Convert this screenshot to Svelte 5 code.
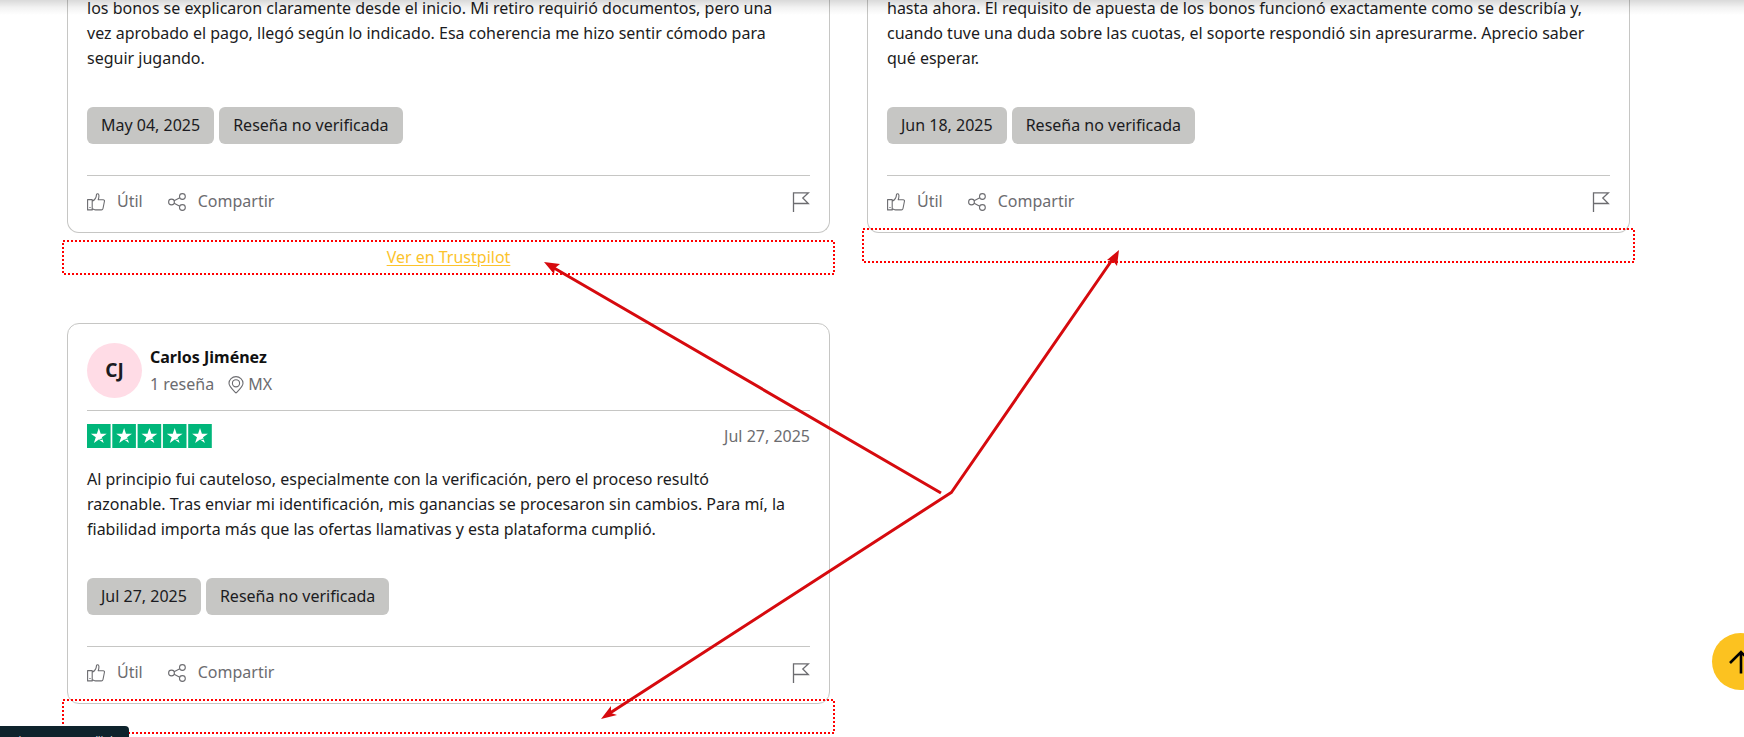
<script>
  const reviews = [
    {
      text: 'los bonos se explicaron claramente desde el inicio. Mi retiro requirió documentos, pero una\nvez aprobado el pago, llegó según lo indicado. Esa coherencia me hizo sentir cómodo para\nseguir jugando.',
      date: 'May 04, 2025',
      link: true
    },
    {
      text: 'hasta ahora. El requisito de apuesta de los bonos funcionó exactamente como se describía y,\ncuando tuve una duda sobre las cuotas, el soporte respondió sin apresurarme. Aprecio saber\nqué esperar.',
      date: 'Jun 18, 2025'
    },
    {
      name: 'Carlos Jiménez',
      initials: 'CJ',
      reviews: '1 reseña',
      country: 'MX',
      text: 'Al principio fui cauteloso, especialmente con la verificación, pero el proceso resultó\nrazonable. Tras enviar mi identificación, mis ganancias se procesaron sin cambios. Para mí, la\nfiabilidad importa más que las ofertas llamativas y esta plataforma cumplió.',
      date: 'Jul 27, 2025'
    }
  ];
  const stars = [0, 1, 2, 3, 4];
</script>

<div class="page">
  <main class="grid">
    {#each reviews as r}
      <div class="item">
        <article class="card" class:cut={!r.name}>
          {#if r.name}
            <header class="author">
              <span class="avatar">{r.initials}</span>
              <div class="who">
                <strong>{r.name}</strong>
                <div class="meta">
                  <span>{r.reviews}</span>
                  <span class="place">
                    <svg width="16" height="18" viewBox="0 0 16 18" fill="none" stroke="currentColor" stroke-width="1.1">
                      <path d="M8 17C5.5 14.2 1 10.7 1 7.2a7 6.6 0 0 1 14 0C15 10.7 10.5 14.2 8 17Z" />
                      <circle cx="8" cy="7.3" r="3.6" />
                    </svg>
                    {r.country}
                  </span>
                </div>
              </div>
            </header>
            <div class="rating">
              <svg width="125" height="24" viewBox="0 0 125 24" role="img" aria-label="5 de 5">
                {#each stars as i}
                  <g transform="translate({i * 25.3} 0)">
                    <rect width="23.6" height="24" fill="#00b67a" />
                    <path fill="#fff" d="M11.8 4l1.9 5.7h6l-4.9 3.5 1.9 5.8-4.9-3.6L6.9 19l1.9-5.8-4.9-3.5h6z" />
                    <path fill="#00b67a" d="M11.8 15.5l3.2-.9.6 1.5z" />
                  </g>
                {/each}
              </svg>
              <time>{r.date}</time>
            </div>
          {/if}
          <p>{r.text}</p>
          <div class="tags">
            <span class="tag">{r.date}</span>
            <span class="tag">Reseña no verificada</span>
          </div>
          <footer>
            <button type="button">
              <svg width="18" height="18" viewBox="0 0 18 18" fill="none" stroke="currentColor" stroke-width="1.1" stroke-linejoin="round">
                <path d="M.6 6.6h4.6v10.3H.6zM5.2 8.2C7.8 7 9.3 4.6 9.5 1.6 9.6.5 11.7.4 11.9 2.3c.1 1.5-.2 3.1-.7 4.500h4.9c1.200 0 1.500.8 1.300 1.700l-1.400 7c-.2 1-.7 1.400-1.600 1.400H8.500c-1.200 0-2-.8-3.300-1.200" />
                <path d="M2.4 14.5h1.2" />
              </svg>
              Útil
            </button>
            <button type="button">
              <svg width="18" height="18" viewBox="0 0 18 18" fill="none" stroke="currentColor" stroke-width="1.1">
                <circle cx="3.5" cy="9" r="2.9" />
                <circle cx="14.4" cy="3.5" r="2.9" />
                <circle cx="14.4" cy="14.5" r="2.9" />
                <path d="M6.1 7.7l5.7-2.9M6.1 10.3l5.7 2.9" />
              </svg>
              Compartir
            </button>
            <button type="button" class="flag" aria-label="Denunciar">
              <svg width="18" height="20" viewBox="0 0 18 20" fill="none" stroke="currentColor" stroke-width="1.3">
                <path d="M1.5 20V.8h15L10.8 6l5.5 5.5H1.5" />
              </svg>
            </button>
          </footer>
        </article>
        {#if r.link}
          <a class="more" href="#trustpilot">Ver en Trustpilot</a>
        {/if}
        <svg class="mark" class:below={r.link} aria-hidden="true"><rect x="1" y="1" /></svg>
      </div>
    {/each}
  </main>

  <svg class="arrows" width="1744" height="737" viewBox="0 0 1744 737" fill="none" stroke="#d60a0e" stroke-width="3" aria-hidden="true">
    <path d="M941 493L554 268M951 493L1112 260M952 492L610 713" />
    <g fill="#d60a0e" stroke="none">
      <path d="M544 262L560 264L555 268L554 274Z" />
      <path d="M1119 250L1117 266L1113 261L1107 260Z" />
      <path d="M601 719L611 706L611 713L617 715Z" />
    </g>
  </svg>

  <div class="topshade"></div>
  <button type="button" class="totop" aria-label="Subir">
    <svg width="24" height="24" viewBox="0 0 24 24" fill="none" stroke="#000" stroke-width="2.6"><path d="M12 23.5V2M1 13L12 2l11 11" /></svg>
  </button>
  <div class="status">casinosmexa.com/link</div>
</div>

<style>
  :global(body) { background: #fff; overflow: hidden; }
  .page {
    position: relative;
    min-height: 100vh;
    overflow: hidden;
    font-family: "Noto Sans", "Open Sans", sans-serif;
    font-size: 16px;
    line-height: 25px;
    color: #1b1b21;
    box-sizing: border-box;
    padding: 0 114px 0 67px;
  }
  .grid {
    display: grid;
    grid-template-columns: 1fr 1fr;
    column-gap: 37px;
    align-items: start;
    margin-top: -4px;
  }
  .item { position: relative; min-width: 0; }
  .card {
    border: 1px solid #c6c6c4;
    border-radius: 12px;
    padding: 19px 19px 18px;
  }
  .cut { border-top: 0; border-radius: 0 0 12px 12px; padding-top: 0; }
  .author {
    display: flex;
    gap: 8px;
    padding-bottom: 12px;
    border-bottom: 1px solid #c6c6c4;
  }
  .avatar {
    width: 55px;
    height: 55px;
    border-radius: 50%;
    background: #ffdce6;
    display: grid;
    place-items: center;
    font-weight: 700;
    font-size: 19px;
  }
  .who { display: flex; flex-direction: column; gap: 2px; padding-top: 2px; }
  strong { font-weight: 700; color: #111; }
  .meta { display: flex; gap: 14px; color: #6c6c70; }
  .place { display: flex; align-items: center; gap: 4px; }
  .rating {
    display: flex;
    justify-content: space-between;
    align-items: center;
    height: 24px;
    margin: 13px 0 19px;
    color: #6c6c70;
  }
  p { margin: 0 0 36px; white-space: pre-line; }
  .tags { display: flex; gap: 5px; }
  .tag {
    background: #c6c6c4;
    border-radius: 6px;
    padding: 6px 14px;
  }
  footer {
    display: flex;
    align-items: center;
    gap: 25px;
    margin-top: 31px;
    border-top: 1px solid #c6c6c4;
    padding-top: 13px;
  }
  button { border: 0; background: none; padding: 0; font: inherit; cursor: pointer; }
  footer button { display: flex; align-items: center; gap: 12px; color: #6c6c70; }
  footer .flag { margin-left: auto; }
  .more {
    display: block;
    width: max-content;
    margin: 12px auto 53px;
    color: #fcc32c;
    text-decoration: underline;
    text-underline-offset: 2px;
  }
  .mark {
    position: absolute;
    left: -5px;
    bottom: -30px;
    width: calc(100% + 10px);
    height: 35px;
  }
  .below { bottom: 48px; }
  .mark rect {
    width: calc(100% - 2px);
    height: calc(100% - 2px);
    fill: none;
    stroke: #f00;
    stroke-width: 2px;
    stroke-dasharray: 2 2;
    shape-rendering: crispEdges;
  }
  .arrows { position: absolute; left: 0; top: 0; pointer-events: none; }
  .topshade {
    position: absolute;
    inset: 0 0 auto;
    height: 15px;
    background: linear-gradient(rgba(0, 0, 0, 0.15), rgba(0, 0, 0, 0.05) 50%, transparent);
  }
  .totop {
    position: absolute;
    right: -25px;
    bottom: 47px;
    width: 57px;
    height: 57px;
    border-radius: 50%;
    background: #fcc220;
    display: grid;
    place-items: center;
  }
  .status {
    position: absolute;
    left: 0;
    bottom: 0;
    width: 129px;
    height: 11px;
    box-sizing: border-box;
    padding: 5px 13px 0 0;
    overflow: hidden;
    background: #0e232c;
    border-radius: 0 4px 0 0;
    color: #d5dde0;
    font-size: 11px;
    line-height: 18px;
    text-align: right;
    white-space: nowrap;
  }
</style>
